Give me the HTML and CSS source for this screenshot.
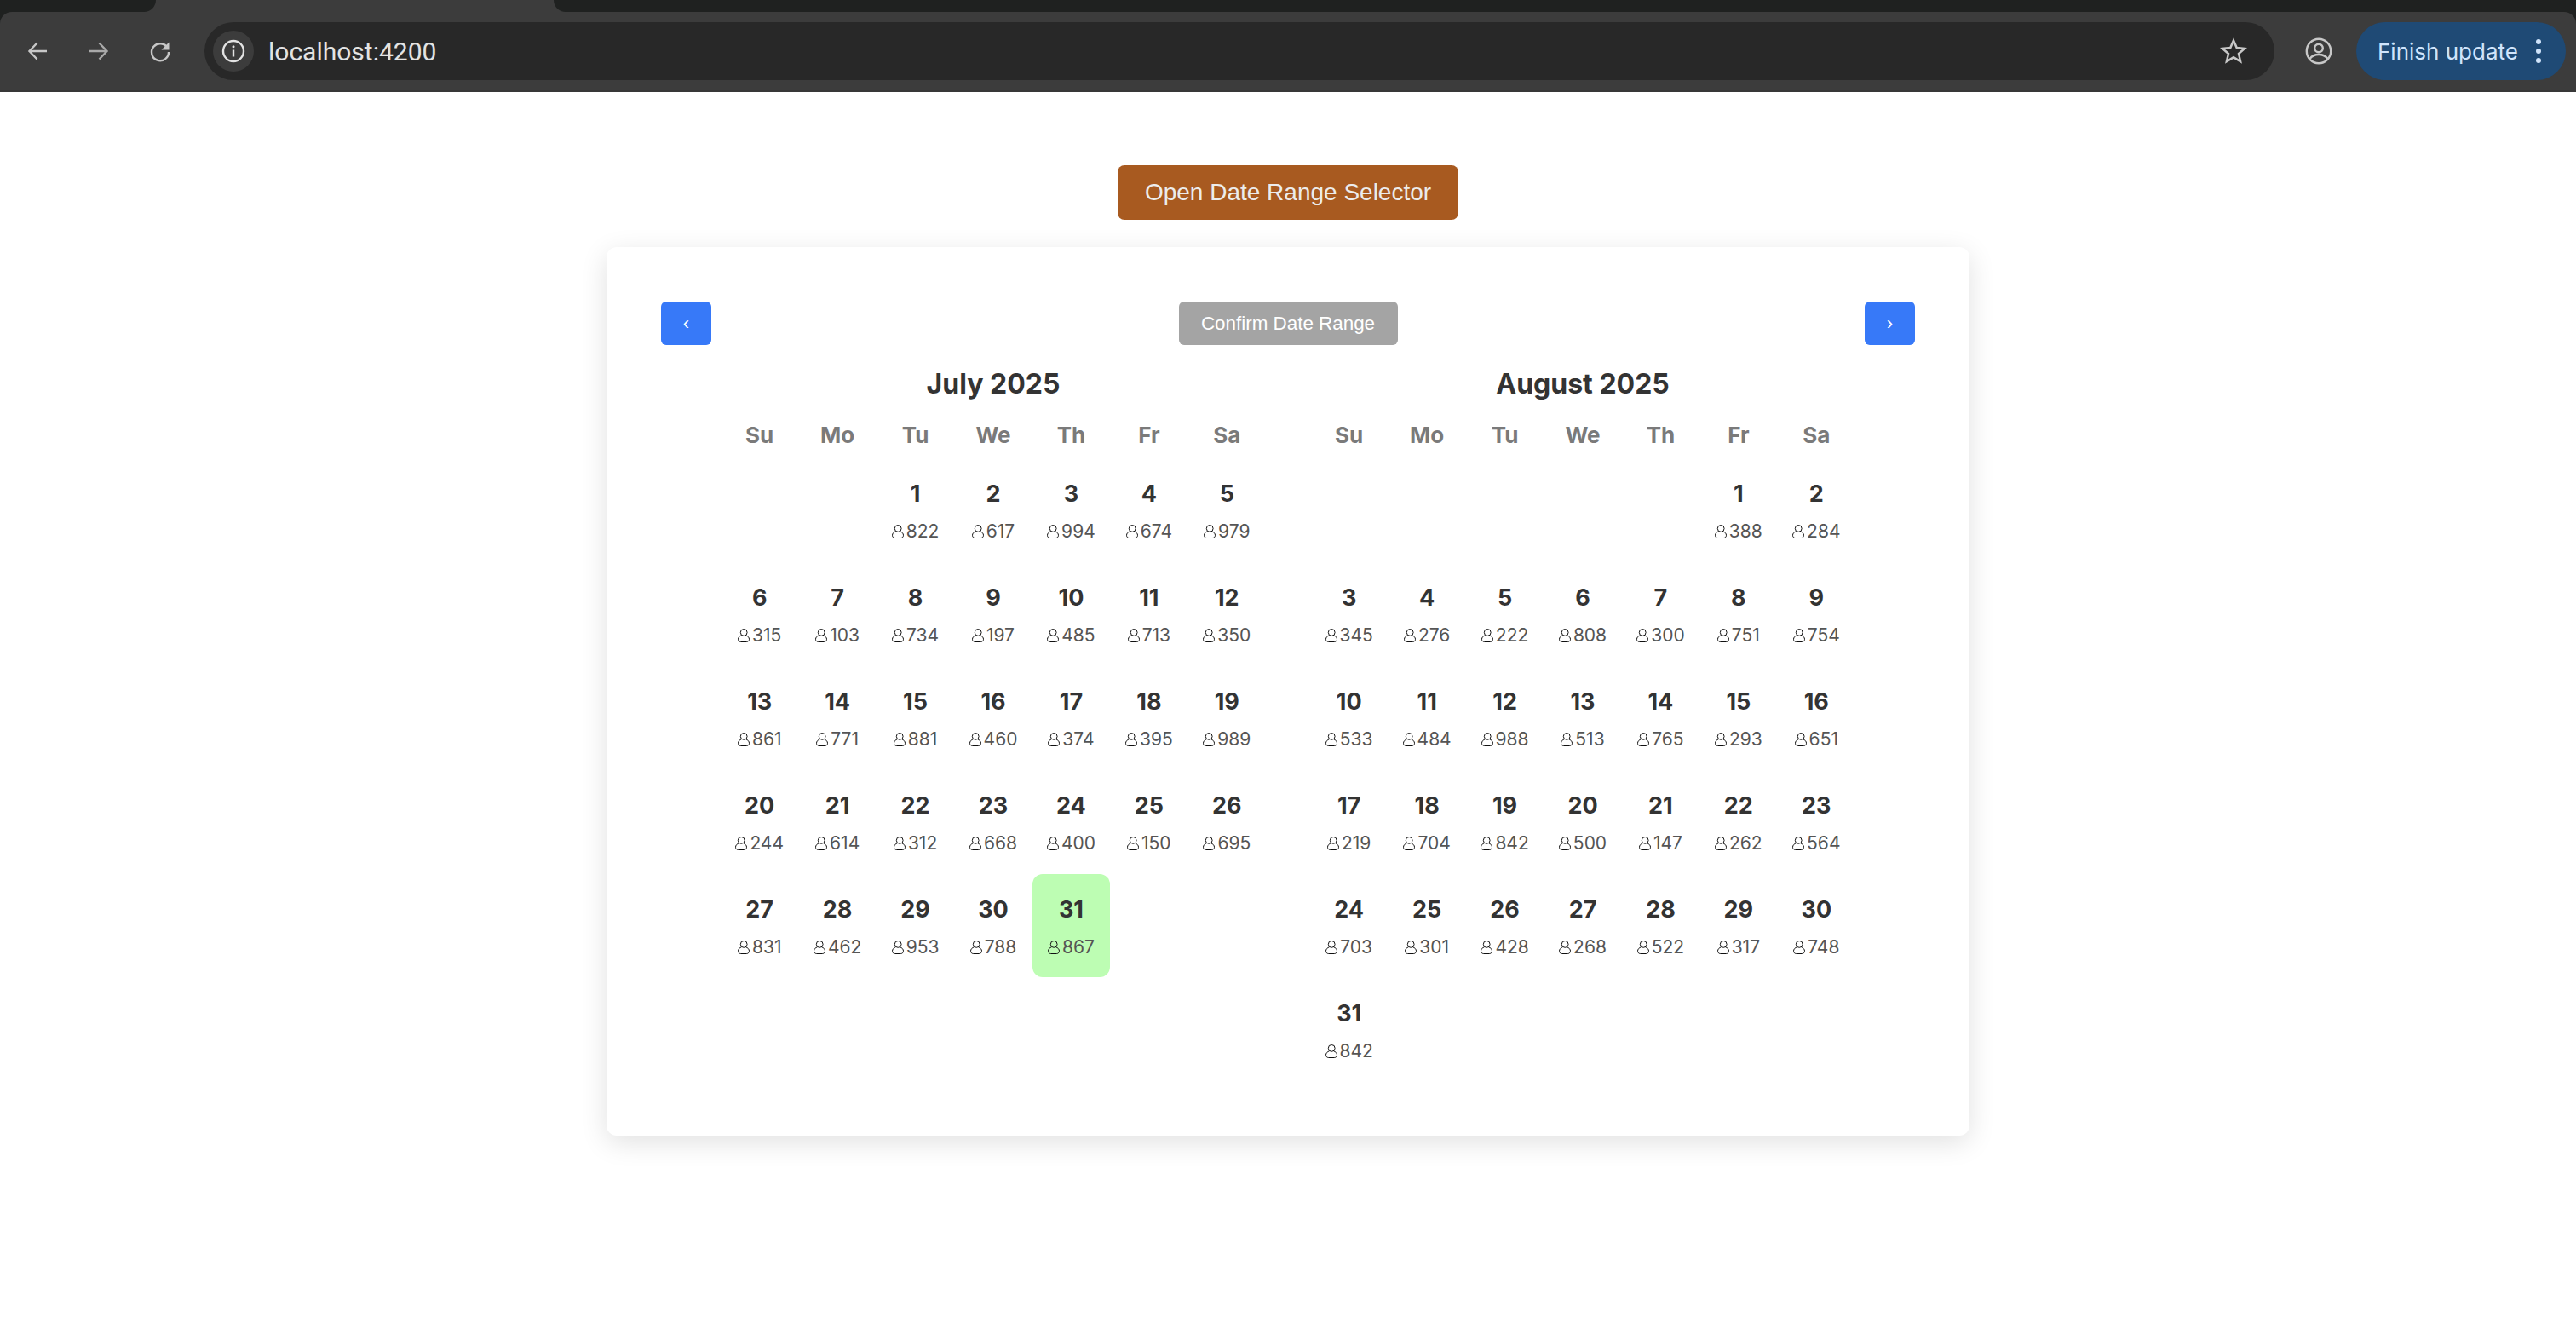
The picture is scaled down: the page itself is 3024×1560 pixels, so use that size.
FILE: index.html
```html
<!DOCTYPE html>
<html lang="en">
<head>
<meta charset="utf-8">
<title>localhost:4200</title>
<link rel="stylesheet" href="styles.css">
</head>
<body>
<svg class="defs" width="0" height="0" aria-hidden="true"><symbol id="person" viewBox="0 0 14 16"><circle cx="7.200" cy="4.400" r="3.900" fill="none" stroke="currentColor" stroke-width="1"/><path d="M4.400 7.800C2.200 8.500.5 10.300.5 12.300c0 2 1.400 3.200 3.200 3.200h6.600c1.800 0 3.200-1.200 3.200-3.200 0-2-1.700-3.800-3.900-4.500" fill="none" stroke="currentColor" stroke-width="1"/></symbol></svg>
<header class="browser">
  <div class="tabstrip">
    <div class="tab-left"></div>
    <div class="tab-right"></div>
  </div>
  <div class="toolbar">
    <div class="navicons">
      <svg class="tool-icon" viewBox="0 0 28 28"><path d="M25 14H5M13.500 4.500 4.500 14l9 9.500" fill="none" stroke="#c7c7c7" stroke-width="2.400"/></svg>
      <svg class="tool-icon" viewBox="0 0 28 28"><path d="M3 14h20M14.500 4.500l9 9.500-9 9.500" fill="none" stroke="#a9a9a9" stroke-width="2.400"/></svg>
      <svg class="tool-icon" viewBox="0 0 28 28"><path d="M22.800 10.500A10 10 0 1 0 24 15" fill="none" stroke="#c7c7c7" stroke-width="2.400"/><path d="M24.500 3.500v9h-9z" fill="#c7c7c7"/></svg>
    </div>
    <div class="address">
      <div class="info-chip"><svg class="info-icon" viewBox="0 0 28 28"><circle cx="14" cy="14" r="12" fill="none" stroke="#e3e3e3" stroke-width="2.400"/><path d="M14 12.500v8" stroke="#e3e3e3" stroke-width="2.400"/><circle cx="14" cy="8.800" r="1.500" fill="#e3e3e3"/></svg></div>
      <span class="url">localhost:4200</span>
      <svg class="star" viewBox="0 0 32 32"><path d="m16 3.500 3.700 8.600 9.300.8-7 6.100 2.100 9.100-8.100-4.800-8.100 4.800L10 19 3 12.900l9.300-.8z" fill="none" stroke="#c7c7c7" stroke-width="2.500"/></svg>
    </div>
    <svg class="profile" viewBox="0 0 32 32"><circle cx="16" cy="16" r="14.200" fill="none" stroke="#c7c7c7" stroke-width="2.400"/><circle cx="16" cy="12.500" r="4.800" fill="none" stroke="#c7c7c7" stroke-width="2.400"/><path d="M5.500 25c2.500-3.400 6.300-5 10.500-5s8 1.600 10.500 5" fill="none" stroke="#c7c7c7" stroke-width="2.400"/></svg>
    <div class="update">
      <span>Finish update</span>
      <span class="dots"><i></i><i></i><i></i></span>
    </div>
  </div>
</header>
<main class="page">
  <button class="open-btn">Open Date Range Selector</button>
  <section class="card">
    <div class="card-nav">
      <button class="nav-btn">‹</button>
      <button class="confirm-btn">Confirm Date Range</button>
      <button class="nav-btn">›</button>
    </div>
    <div class="months">
      <div class="month">
        <h2 class="month-title">July 2025</h2>
        <div class="weekdays"><span>Su</span><span>Mo</span><span>Tu</span><span>We</span><span>Th</span><span>Fr</span><span>Sa</span></div>
        <div class="days">
          <div></div><div></div>
          <div class="day"><b>1</b><span><svg><use href="#person"/></svg>822</span></div>
          <div class="day"><b>2</b><span><svg><use href="#person"/></svg>617</span></div>
          <div class="day"><b>3</b><span><svg><use href="#person"/></svg>994</span></div>
          <div class="day"><b>4</b><span><svg><use href="#person"/></svg>674</span></div>
          <div class="day"><b>5</b><span><svg><use href="#person"/></svg>979</span></div>
          <div class="day"><b>6</b><span><svg><use href="#person"/></svg>315</span></div>
          <div class="day"><b>7</b><span><svg><use href="#person"/></svg>103</span></div>
          <div class="day"><b>8</b><span><svg><use href="#person"/></svg>734</span></div>
          <div class="day"><b>9</b><span><svg><use href="#person"/></svg>197</span></div>
          <div class="day"><b>10</b><span><svg><use href="#person"/></svg>485</span></div>
          <div class="day"><b>11</b><span><svg><use href="#person"/></svg>713</span></div>
          <div class="day"><b>12</b><span><svg><use href="#person"/></svg>350</span></div>
          <div class="day"><b>13</b><span><svg><use href="#person"/></svg>861</span></div>
          <div class="day"><b>14</b><span><svg><use href="#person"/></svg>771</span></div>
          <div class="day"><b>15</b><span><svg><use href="#person"/></svg>881</span></div>
          <div class="day"><b>16</b><span><svg><use href="#person"/></svg>460</span></div>
          <div class="day"><b>17</b><span><svg><use href="#person"/></svg>374</span></div>
          <div class="day"><b>18</b><span><svg><use href="#person"/></svg>395</span></div>
          <div class="day"><b>19</b><span><svg><use href="#person"/></svg>989</span></div>
          <div class="day"><b>20</b><span><svg><use href="#person"/></svg>244</span></div>
          <div class="day"><b>21</b><span><svg><use href="#person"/></svg>614</span></div>
          <div class="day"><b>22</b><span><svg><use href="#person"/></svg>312</span></div>
          <div class="day"><b>23</b><span><svg><use href="#person"/></svg>668</span></div>
          <div class="day"><b>24</b><span><svg><use href="#person"/></svg>400</span></div>
          <div class="day"><b>25</b><span><svg><use href="#person"/></svg>150</span></div>
          <div class="day"><b>26</b><span><svg><use href="#person"/></svg>695</span></div>
          <div class="day"><b>27</b><span><svg><use href="#person"/></svg>831</span></div>
          <div class="day"><b>28</b><span><svg><use href="#person"/></svg>462</span></div>
          <div class="day"><b>29</b><span><svg><use href="#person"/></svg>953</span></div>
          <div class="day"><b>30</b><span><svg><use href="#person"/></svg>788</span></div>
          <div class="day selected"><b>31</b><span><svg><use href="#person"/></svg>867</span></div>
        </div>
      </div>
      <div class="month">
        <h2 class="month-title">August 2025</h2>
        <div class="weekdays"><span>Su</span><span>Mo</span><span>Tu</span><span>We</span><span>Th</span><span>Fr</span><span>Sa</span></div>
        <div class="days">
          <div></div><div></div><div></div><div></div><div></div>
          <div class="day"><b>1</b><span><svg><use href="#person"/></svg>388</span></div>
          <div class="day"><b>2</b><span><svg><use href="#person"/></svg>284</span></div>
          <div class="day"><b>3</b><span><svg><use href="#person"/></svg>345</span></div>
          <div class="day"><b>4</b><span><svg><use href="#person"/></svg>276</span></div>
          <div class="day"><b>5</b><span><svg><use href="#person"/></svg>222</span></div>
          <div class="day"><b>6</b><span><svg><use href="#person"/></svg>808</span></div>
          <div class="day"><b>7</b><span><svg><use href="#person"/></svg>300</span></div>
          <div class="day"><b>8</b><span><svg><use href="#person"/></svg>751</span></div>
          <div class="day"><b>9</b><span><svg><use href="#person"/></svg>754</span></div>
          <div class="day"><b>10</b><span><svg><use href="#person"/></svg>533</span></div>
          <div class="day"><b>11</b><span><svg><use href="#person"/></svg>484</span></div>
          <div class="day"><b>12</b><span><svg><use href="#person"/></svg>988</span></div>
          <div class="day"><b>13</b><span><svg><use href="#person"/></svg>513</span></div>
          <div class="day"><b>14</b><span><svg><use href="#person"/></svg>765</span></div>
          <div class="day"><b>15</b><span><svg><use href="#person"/></svg>293</span></div>
          <div class="day"><b>16</b><span><svg><use href="#person"/></svg>651</span></div>
          <div class="day"><b>17</b><span><svg><use href="#person"/></svg>219</span></div>
          <div class="day"><b>18</b><span><svg><use href="#person"/></svg>704</span></div>
          <div class="day"><b>19</b><span><svg><use href="#person"/></svg>842</span></div>
          <div class="day"><b>20</b><span><svg><use href="#person"/></svg>500</span></div>
          <div class="day"><b>21</b><span><svg><use href="#person"/></svg>147</span></div>
          <div class="day"><b>22</b><span><svg><use href="#person"/></svg>262</span></div>
          <div class="day"><b>23</b><span><svg><use href="#person"/></svg>564</span></div>
          <div class="day"><b>24</b><span><svg><use href="#person"/></svg>703</span></div>
          <div class="day"><b>25</b><span><svg><use href="#person"/></svg>301</span></div>
          <div class="day"><b>26</b><span><svg><use href="#person"/></svg>428</span></div>
          <div class="day"><b>27</b><span><svg><use href="#person"/></svg>268</span></div>
          <div class="day"><b>28</b><span><svg><use href="#person"/></svg>522</span></div>
          <div class="day"><b>29</b><span><svg><use href="#person"/></svg>317</span></div>
          <div class="day"><b>30</b><span><svg><use href="#person"/></svg>748</span></div>
          <div class="day"><b>31</b><span><svg><use href="#person"/></svg>842</span></div>
        </div>
      </div>
    </div>
  </section>
</main>
</body>
</html>
```
FILE: styles.css
```css
* { box-sizing: border-box; }
html, body { margin: 0; padding: 0; height: 100%; background: #fff; overflow: hidden; }
body { font-family: Inter, "Liberation Sans", sans-serif; color: #333; }
.defs { position: absolute; }

.browser { height: 108px; background: #1f2120; display: flex; flex-direction: column; }
.tabstrip { height: 14px; display: flex; justify-content: space-between; background: #3c3c3c; flex: none; }
.tab-left { width: 183px; background: #1f2120; border-bottom-right-radius: 18px; }
.tab-right { width: 2374px; background: #1f2120; border-bottom-left-radius: 18px; }
.toolbar { flex: 1; display: flex; align-items: flex-start; padding-top: 12px; background: #3c3c3c; border-bottom: 2px solid #383838; border-radius: 14px 14px 0 0; }
.navicons { width: 240px; height: 68px; display: flex; align-items: center; padding-left: 30px; gap: 44px; flex: none; }
.tool-icon { width: 28px; height: 28px; flex: none; }
.address { width: 2430px; height: 68px; border-radius: 34px; background: #282828; display: flex; align-items: center; padding: 0 32px 0 10px; flex: none; }
.info-chip { width: 48px; height: 48px; border-radius: 50%; background: #3c3c3c; display: flex; align-items: center; justify-content: center; flex: none; }
.info-icon { width: 28px; height: 28px; }
.url { margin-left: 17px; font-size: 30px; color: #e3e3e3; flex: 1; font-family: Roboto, Inter, sans-serif; }
.star { width: 32px; height: 32px; flex: none; }
.profile { width: 32px; height: 32px; margin: 18px 0 0 36px; flex: none; }
.update { width: 246px; height: 68px; margin-left: 28px; border-radius: 34px; background: #1f4a75; color: #d0e4fb; font-size: 26px; display: flex; align-items: center; padding-left: 25px; flex: none; }
.dots { display: flex; flex-direction: column; gap: 5px; margin-left: 21px; }
.dots i { width: 6px; height: 6px; border-radius: 50%; background: #d0e4fb; display: block; }

.page { display: flex; flex-direction: column; align-items: center; padding-top: 86px; }
.open-btn { width: 400px; height: 64px; border: 0; border-radius: 8px; background: #a85a20; color: #ececec; font: 28px "Liberation Sans", Arial, sans-serif; padding: 0; }
.card { width: 1600px; height: 1043px; margin-top: 32px; padding: 64px; background: #fff; border-radius: 12px; box-shadow: 0 8px 32px rgba(0, 0, 0, .12); }
.card-nav { display: flex; justify-content: space-between; align-items: center; height: 51px; }
.nav-btn { width: 59px; height: 51px; border: 0; border-radius: 6px; background: #3779f8; color: #fff; font: 22px "Liberation Sans", Arial, sans-serif; padding: 0; }
.confirm-btn { width: 257px; height: 51px; border: 0; border-radius: 6px; background: #a4a4a4; color: #fff; font: 22.400px "Liberation Sans", Arial, sans-serif; padding: 0; }
.months { display: flex; justify-content: center; gap: 52px; }
.month { width: 640px; }
.month-title { margin: 0; height: 92px; line-height: 92px; font-size: 32px; font-weight: 700; text-align: center; color: #333; }
.weekdays { display: grid; grid-template-columns: repeat(7, 1fr); height: 27px; line-height: 27px; margin-bottom: 14px; font-size: 26px; font-weight: 700; color: #7a7a7a; text-align: center; }
.days { display: grid; grid-template-columns: repeat(7, 1fr); grid-auto-rows: 122px; }
.day { height: 121px; border-radius: 12px; display: flex; flex-direction: column; align-items: center; padding-top: 23px; }
.day b { font-size: 27px; line-height: 38px; font-weight: 700; color: #333; }
.day span { display: flex; align-items: center; margin-top: 11px; font-size: 21px; line-height: 28px; color: #555; }
.day svg { width: 14px; height: 16px; margin-right: 3px; color: #111; }
.selected { background: #bdfdb3; }
```
